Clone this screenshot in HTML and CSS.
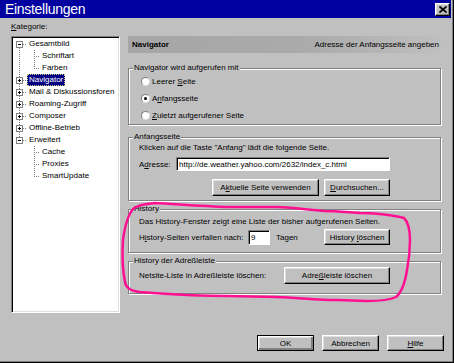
FILE: index.html
```html
<!DOCTYPE html>
<html lang="de">
<head>
  <meta charset="UTF-8">
  <title>Einstellungen</title>
  <link rel="stylesheet" href="styles.css">
</head>
<body>
  <div class="window">
    <div class="titlebar">
      <span class="title">Einstellungen</span>
      <button class="close" aria-label="Schließen">
        <svg width="8" height="7" viewBox="0 0 8 7"><path d="M0.5 0.5 L7.5 6.5 M7.5 0.5 L0.5 6.5" stroke="#000" stroke-width="1.7"/></svg>
      </button>
    </div>

    <div class="content">
      <!-- Kategorie-Baum -->
      <div class="left">
        <div class="cat-label"><u>K</u>ategorie:</div>
        <div class="tree">
          <div class="row"><span class="cell a-first"><span class="exp"></span></span><span class="label">Gesamtbild</span></div>
          <div class="row"><span class="cell a-pass"></span><span class="cell b b-mid"></span><span class="label sub">Schriftart</span></div>
          <div class="row"><span class="cell a-pass"></span><span class="cell b b-last"></span><span class="label sub">Farben</span></div>
          <div class="row"><span class="cell a-mid"><span class="exp plus"></span></span><span class="label selected">Navigator</span></div>
          <div class="row"><span class="cell a-mid"><span class="exp plus"></span></span><span class="label">Mail &amp; Diskussionsforen</span></div>
          <div class="row"><span class="cell a-mid"><span class="exp plus"></span></span><span class="label">Roaming-Zugriff</span></div>
          <div class="row"><span class="cell a-mid"><span class="exp plus"></span></span><span class="label">Composer</span></div>
          <div class="row"><span class="cell a-mid"><span class="exp plus"></span></span><span class="label">Offline-Betrieb</span></div>
          <div class="row"><span class="cell a-last"><span class="exp"></span></span><span class="label">Erweitert</span></div>
          <div class="row"><span class="cell"></span><span class="cell b b-mid"></span><span class="label sub">Cache</span></div>
          <div class="row"><span class="cell"></span><span class="cell b b-mid"></span><span class="label sub">Proxies</span></div>
          <div class="row"><span class="cell"></span><span class="cell b b-last"></span><span class="label sub">SmartUpdate</span></div>
        </div>
      </div>

      <!-- Einstellungsseite -->
      <div class="right">
        <div class="panel-head">
          <span class="panel-title">Navigator</span>
          <span>Adresse der Anfangsseite angeben</span>
        </div>

        <div class="group g-nav">
          <div class="legend">Navigator wird aufgerufen mit</div>
          <div class="radio-row"><span class="radio"></span><span>Leerer <u>S</u>eite</span></div>
          <div class="radio-row"><span class="radio checked"><span class="dot"></span></span><span>A<u>n</u>fangsseite</span></div>
          <div class="radio-row"><span class="radio"></span><span><u>Z</u>uletzt aufgerufener Seite</span></div>
        </div>

        <div class="group g-start">
          <div class="legend">Anfangsseite</div>
          <div class="line">Klicken auf die Taste "Anfang" lädt die folgende Seite.</div>
          <div class="addr-row">
            <span class="addr-label">A<u>d</u>resse:</span>
            <input class="field" type="text" value="http://de.weather.yahoo.com/2632/index_c.html">
          </div>
          <div class="btn-row">
            <button class="btn w-current">A<u>k</u>tuelle Seite verwenden</button>
            <button class="btn w-browse"><u>D</u>urchsuchen...</button>
          </div>
        </div>

        <div class="group g-hist">
          <div class="legend">History</div>
          <div class="line hist-text">Das History-Fenster zeigt eine Liste der bisher aufgerufenen Seiten.</div>
          <div class="hist-row">
            <span class="hist-label">H<u>i</u>story-Seiten verfallen nach:</span>
            <input class="field days" type="text" value="9">
            <span class="days-unit">Tagen</span>
            <button class="btn w-browse push">History <u>l</u>öschen</button>
          </div>
        </div>

        <div class="group g-addr">
          <div class="legend">History der Adreßleiste</div>
          <div class="addr-clear-row">
            <span>Netsite-Liste in Adreßleiste löschen:</span>
            <button class="btn w-clear">Adre<u>ß</u>leiste löschen</button>
          </div>
        </div>
      </div>
    </div>

    <div class="footer">
      <button class="btn w-foot default">OK</button>
      <button class="btn w-foot">Abbrechen</button>
      <button class="btn w-foot"><u>H</u>ilfe</button>
    </div>

    <!-- Markierung von Hand -->
    <svg class="mark" width="454" height="363" viewBox="0 0 454 363">
      <path d="M155,203 C143,204 136,206 133,209 C128,215 125,225 123,240 C122,255 123,272 125,282 C126,288 130,291 140,292 L153,293 C180,295 205,296 227,296 L277,297 C300,298 320,300 337,300 L367,301 C380,301 390,300 396,297 C402,292 405,283 407,270 C409,260 410,250 410,240 C410,230 408,222 404,218 L400,217 C385,214 370,213 360,213 C345,212 335,211 324,211 C300,209 290,207 277,207 L227,207 C200,206 175,204 155,203 Z" fill="none" stroke="#ff1090" stroke-width="2.5" stroke-linejoin="round"/>
    </svg>
  </div>
</body>
</html>
```

FILE: styles.css
```css
body {
  margin: 0;
  font-family: "Liberation Sans", Arial, sans-serif;
  font-size: 8px;
  color: #000;
  background: #c0c0c0;
}
u {
  text-decoration: underline;
}
.window {
  --dv: repeating-linear-gradient(to bottom, #808080 0 1px, transparent 1px 2px);
  --dh: repeating-linear-gradient(to right, #808080 0 1px, transparent 1px 2px);
  position: relative;
  width: 454px;
  height: 363px;
  box-sizing: border-box;
  background: #c0c0c0;
  border-right: 1px solid #000;
  border-bottom: 1px solid #000;
  box-shadow: inset -1px -1px #808080;
  display: flex;
  flex-direction: column;
  overflow: hidden;
}
.titlebar {
  flex: none;
  height: 18px;
  margin-right: 2px;
  padding: 0 1px 0 5px;
  background: #0000a0;
  display: flex;
  align-items: center;
  justify-content: space-between;
}
.title {
  color: #fff;
  font-size: 14px;
  letter-spacing: -0.3px;
  line-height: 18px;
}
.close {
  width: 15px;
  height: 13px;
  padding: 0;
  background: #c0c0c0;
  border: 1px solid;
  border-color: #fff #000 #000 #fff;
  box-shadow: inset -1px -1px #808080, inset 1px 1px #dfdfdf;
  display: flex;
  align-items: center;
  justify-content: center;
}
.content {
  display: flex;
  gap: 8px;
  padding: 4px 12px 0 11px;
}
.left {
  width: 109px;
  flex: none;
}
.cat-label {
  line-height: 10px;
  margin-bottom: 4px;
}
.tree {
  height: 277px;
  box-sizing: border-box;
  background: #fff;
  border: 1px solid;
  border-color: #808080 #fff #fff #808080;
  box-shadow: inset 1px 1px #000, inset -1px -1px #dfdfdf;
  padding: 1px;
}
.row {
  display: flex;
  height: 12px;
  line-height: 12px;
  white-space: nowrap;
}
.cell {
  width: 14px;
  flex: none;
  display: flex;
  align-items: center;
}
.cell.b {
  width: 15px;
}
.a-pass {
  background: var(--dv) 6px 0 / 1px 100% no-repeat;
}
.a-first {
  background: var(--dh) 6px 6px / 8px 1px no-repeat, var(--dv) 6px 6px / 1px 6px no-repeat;
}
.a-mid {
  background: var(--dh) 6px 6px / 8px 1px no-repeat, var(--dv) 6px 0 / 1px 100% no-repeat;
}
.a-last {
  background: var(--dh) 6px 6px / 8px 1px no-repeat, var(--dv) 6px 0 / 1px 6px no-repeat;
}
.b-mid {
  background: var(--dh) 7px 6px / 6px 1px no-repeat, var(--dv) 7px 0 / 1px 100% no-repeat;
}
.b-last {
  background: var(--dh) 7px 6px / 6px 1px no-repeat, var(--dv) 7px 0 / 1px 6px no-repeat;
}
.exp {
  width: 7px;
  height: 7px;
  margin-left: 3px;
  box-sizing: border-box;
  border: 1px solid #808080;
  background: linear-gradient(#000, #000) center / 3px 1px no-repeat, #fff;
}
.exp.plus {
  background: linear-gradient(#000, #000) center / 3px 1px no-repeat,
              linear-gradient(#000, #000) center / 1px 3px no-repeat, #fff;
}
.label {
  margin-left: 1px;
  padding: 0 1px;
}
.label.sub {
  margin-left: 0;
  padding: 0;
}
.label.selected {
  background: #000080;
  color: #fff;
  line-height: 10px;
  height: 10px;
  align-self: center;
  border: 1px dotted #c8c890;
  margin-left: 0;
}
.right {
  flex: 1;
  display: flex;
  flex-direction: column;
}
.panel-head {
  margin-top: 14px;
  height: 17px;
  padding: 0 2px 0 4px;
  display: flex;
  align-items: center;
  justify-content: space-between;
  background: linear-gradient(to right, #a6a6a6 0%, #aaaaaa 55%, #bebebe 100%);
}
.panel-title {
  font-weight: bold;
}
.group {
  border: 1px solid #808080;
  box-shadow: inset 1px 1px #fff, 1px 1px #fff;
  padding: 0 50px 0 10px;
}
.legend {
  width: fit-content;
  margin: -6px 0 0 -6px;
  padding: 0 1px;
  line-height: 10px;
  background: #c0c0c0;
}
.g-nav {
  margin-top: 15px;
}
.g-start {
  margin-top: 12px;
  padding-bottom: 4px;
}
.g-hist {
  margin-top: 8px;
  padding-bottom: 7px;
}
.g-addr {
  margin-top: 8px;
  padding-bottom: 9px;
}
.radio-row {
  height: 17px;
  display: flex;
  align-items: center;
  gap: 2px;
  padding-left: 2px;
}
.radio {
  width: 9px;
  height: 9px;
  box-sizing: border-box;
  border-radius: 50%;
  background: #fff;
  border: 1px solid;
  border-color: #808080 #dfdfdf #dfdfdf #808080;
  display: flex;
  align-items: center;
  justify-content: center;
}
.dot {
  width: 3px;
  height: 3px;
  border-radius: 50%;
  background: #000;
}
.line {
  line-height: 12px;
}
.hist-text {
  margin-top: 2px;
}
.addr-row {
  margin-top: 3px;
  height: 14px;
  display: flex;
  align-items: center;
}
.addr-label {
  width: 37px;
  flex: none;
}
.field {
  box-sizing: border-box;
  height: 14px;
  margin: 0;
  padding: 0 2px;
  font: inherit;
  color: #000;
  background: #fff;
  border: 1px solid;
  border-color: #808080 #fff #fff #808080;
  box-shadow: inset 1px 1px #000;
  outline: none;
}
.addr-row .field {
  flex: 1;
  min-width: 0;
}
.btn-row {
  margin-top: 8px;
  display: flex;
  justify-content: flex-end;
  gap: 5px;
}
.btn {
  box-sizing: border-box;
  height: 17px;
  padding: 0;
  font: inherit;
  color: #000;
  background: #c0c0c0;
  border: 1px solid;
  border-color: #fff #000 #000 #fff;
  box-shadow: inset -1px -1px #808080, inset 1px 1px #dfdfdf;
}
.btn.default {
  border-color: #000;
  box-shadow: inset 1px 1px #fff, inset -2px -2px #808080, inset 2px 2px #dfdfdf;
}
.w-current {
  width: 107px;
}
.w-browse {
  width: 66px;
}
.w-clear {
  width: 106px;
}
.w-foot {
  width: 57px;
  height: 16px;
}
.hist-row {
  margin-top: 1px;
  height: 16px;
  display: flex;
  align-items: center;
}
.hist-label {
  width: 109px;
  flex: none;
}
.field.days {
  width: 22px;
  height: 15px;
}
.days-unit {
  margin-left: 6px;
}
.btn.push {
  margin-left: auto;
  height: 16px;
}
.addr-clear-row {
  margin-top: 1px;
  display: flex;
  align-items: center;
  justify-content: space-between;
}
.footer {
  margin-top: auto;
  display: flex;
  justify-content: flex-end;
  gap: 8px;
  padding: 0 9px 11px 0;
}
.mark {
  position: absolute;
  left: 0;
  top: 0;
  pointer-events: none;
}
```
